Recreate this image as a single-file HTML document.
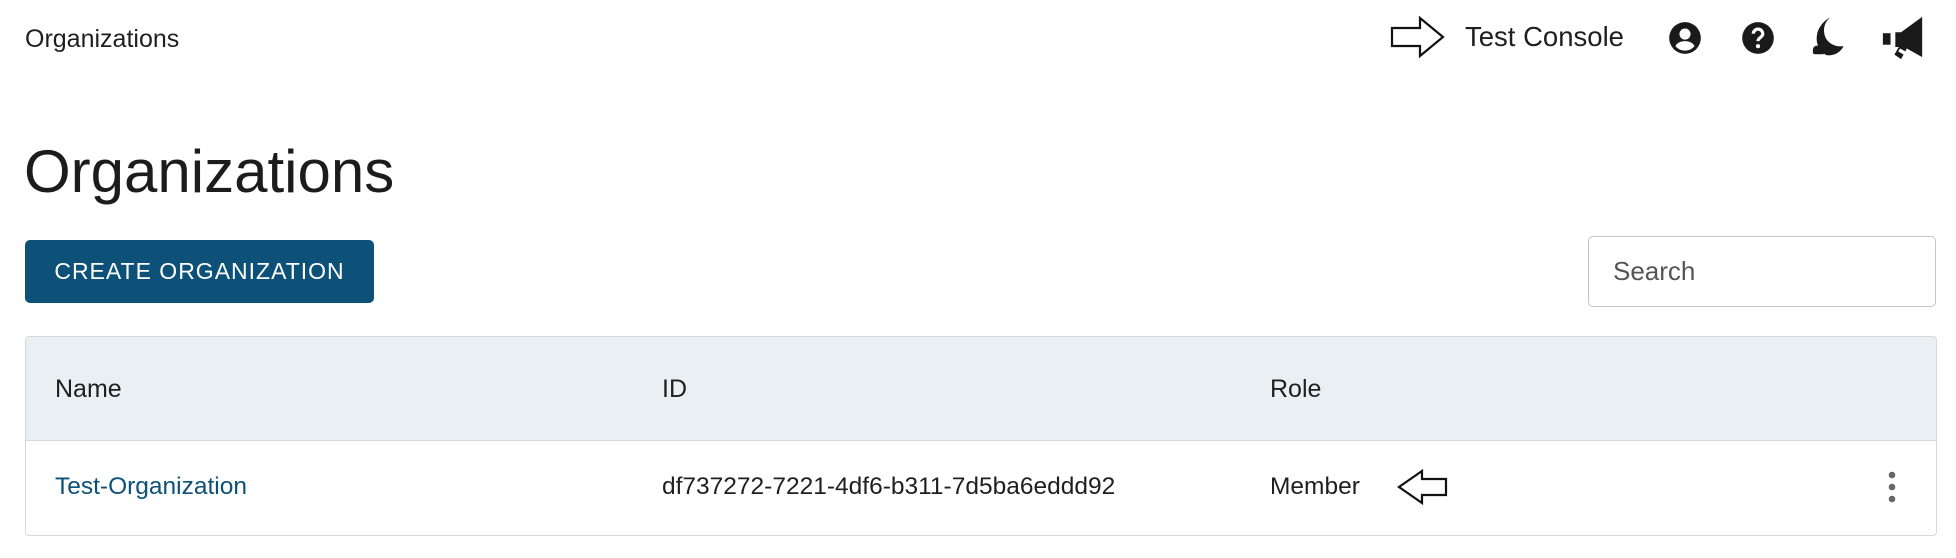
<!DOCTYPE html>
<html><head><style>
*{margin:0;padding:0;box-sizing:border-box}
body{width:1956px;height:558px;background:#fff;font-family:"Liberation Sans",sans-serif;color:#1f1f1f;position:relative;overflow:hidden}
.a{position:absolute;white-space:nowrap}
</style></head><body>
<div class="a" style="left:25px;top:25px;font-size:25px;">Organizations</div>

<svg class="a" style="left:1390px;top:16px" width="56" height="42" viewBox="0 0 56 42"><path d="M2 12 H30 V2 L53 21 L30 40 V30 H2 Z" fill="none" stroke="#111" stroke-width="2.2"/></svg>
<div class="a" style="left:1465px;top:21px;font-size:27.5px;">Test Console</div>
<svg class="a" style="left:1666px;top:19px" width="38" height="38" viewBox="0 0 24 24"><path fill="#1a1a1a" d="M12 2a10 10 0 100 20 10 10 0 000-20zm0 4a3.5 3.5 0 110 7 3.5 3.5 0 010-7zm0 14a8 8 0 01-6-2.8c.6-2 3.3-3.2 6-3.2s5.4 1.2 6 3.2A8 8 0 0112 20z"/></svg>
<svg class="a" style="left:1739px;top:19px" width="38" height="38" viewBox="0 0 24 24"><circle cx="12" cy="12" r="10" fill="#1a1a1a"/><path d="M9 9.3a3 3 0 116 .2c0 2-3 2.3-3 4.5" stroke="#fff" stroke-width="2" fill="none"/><circle cx="12" cy="17.2" r="1.3" fill="#fff"/></svg>
<svg class="a" style="left:1806px;top:15px" width="44" height="44" viewBox="0 0 24 24"><path fill="#1a1a1a" d="M13 1.5C10 4 9 8 10.5 12c1.6 3.6 5.5 5.6 10 5-1.6 3.2-4.6 5-8 5-1.2 0-2-.3-2.6-.8.6-1.3-.2-2.8-1.8-2.9-.4-.5 0-.7-.8-.5l0 0C5.5 16 5 10 8 6c1.3-2 3-3.6 5-4.5z"/><circle cx="6" cy="19" r="2.3" fill="#1a1a1a"/><circle cx="8.3" cy="18" r="2" fill="#1a1a1a"/><rect x="3.7" y="19" width="6.5" height="2.4" rx="1.2" fill="#1a1a1a"/></svg>
<svg class="a" style="left:1880px;top:15px" width="46" height="46" viewBox="0 0 24 24"><path fill="#1a1a1a" d="M22 1v21l-8-4.5L11 23l-3.5-2.3 2.3-4H8V9h3z"/><rect x="1.5" y="9.5" width="4" height="6" fill="#1a1a1a"/><path d="M10.5 17.5l3 1.7-1 1.6-3-1.8z" fill="#fff"/></svg>

<div class="a" style="left:24px;top:137px;font-size:60px;color:#1c1c1c;">Organizations</div>

<div class="a" style="left:25px;top:240px;width:349px;height:63px;background:#0d5078;border-radius:5px;color:#fff;font-size:23px;letter-spacing:1px;line-height:63px;text-align:center;">CREATE ORGANIZATION</div>

<div class="a" style="left:1588px;top:236px;width:348px;height:71px;border:1.5px solid #c4c4c4;border-radius:5px;font-size:26px;color:#555;padding-left:24px;line-height:68px;">Search</div>

<div class="a" style="left:25px;top:336px;width:1912px;height:200px;border:1.5px solid #d8d8d8;border-radius:4px;overflow:hidden">
 <div style="height:104px;background:#eaeff3;border-bottom:1.5px solid #d6d9dc;position:relative;font-size:25px">
  <span class="a" style="left:29px;top:38px">Name</span>
  <span class="a" style="left:636px;top:38px">ID</span>
  <span class="a" style="left:1244px;top:38px">Role</span>
 </div>
 <div style="position:relative;font-size:24.5px">
  <span class="a" style="left:29px;top:32px;color:#0d5078">Test-Organization</span>
  <span class="a" style="left:636px;top:32px">df737272-7221-4df6-b311-7d5ba6eddd92</span>
  <span class="a" style="left:1244px;top:32px">Member</span>
  <svg class="a" style="left:1370px;top:28px" width="52" height="36" viewBox="0 0 52 36"><path d="M50 10 H26 V2 L3 18 L26 34 V26 H50 Z" fill="none" stroke="#111" stroke-width="2.2"/></svg>
  <svg class="a" style="left:1858px;top:29px" width="16" height="34" viewBox="0 0 16 34"><circle cx="8" cy="5" r="3.3" fill="#666"/><circle cx="8" cy="17" r="3.3" fill="#666"/><circle cx="8" cy="29" r="3.3" fill="#666"/></svg>
 </div>
</div>
</body></html>
